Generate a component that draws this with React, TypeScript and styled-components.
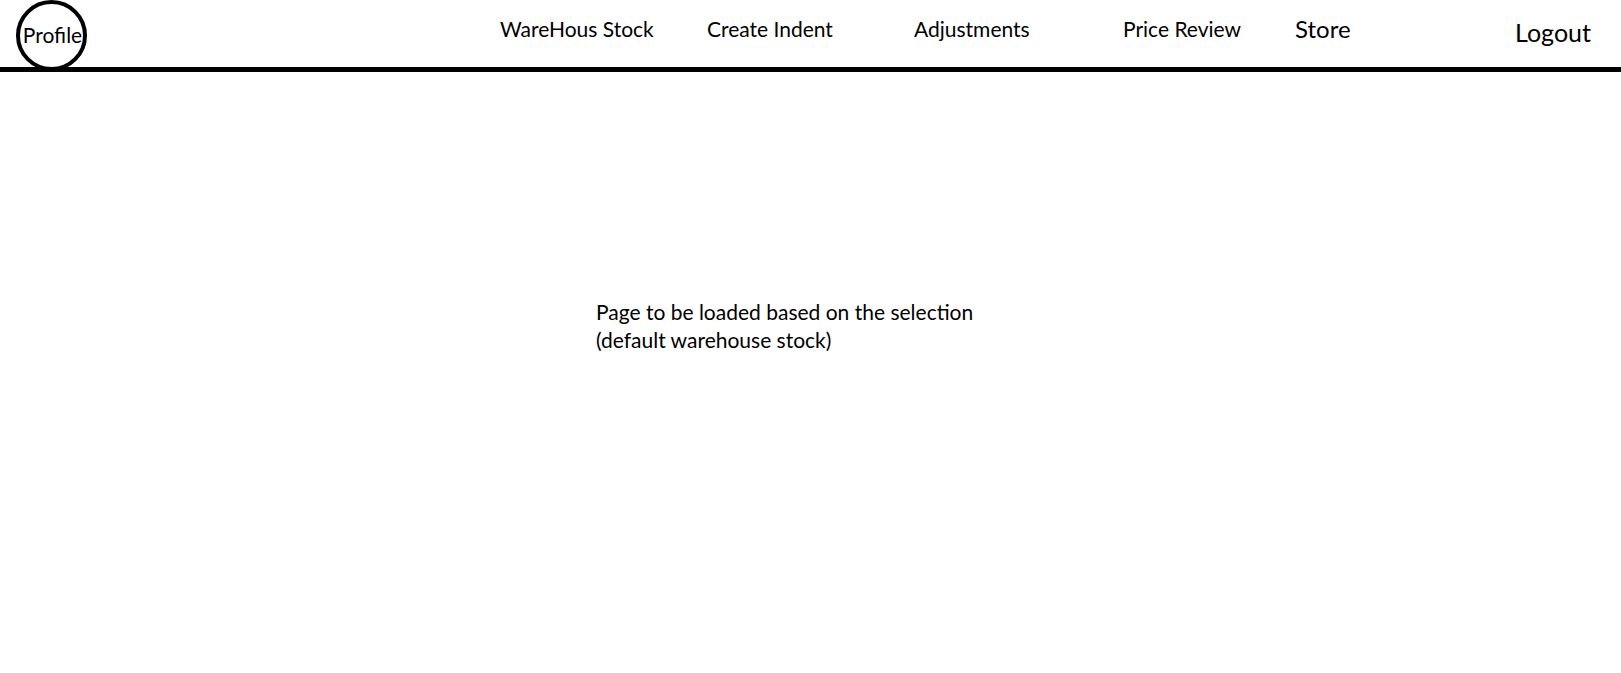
import styled, { createGlobalStyle } from "styled-components";

const GlobalStyle = createGlobalStyle`
  html, body {
    margin: 0;
    padding: 0;
    background: #fff;
  }
  body {
    font-family: Lato, "Open Sans", sans-serif;
    color: #000;
  }
`;

const navItems = [
  { label: "WareHous Stock", width: 207 },
  { label: "Create Indent", width: 207 },
  { label: "Adjustments", width: 209 },
  { label: "Price Review", width: 172 },
];

export default function App() {
  return (
    <Page>
      <GlobalStyle />
      <Header>
        <ProfileCircle>Profile</ProfileCircle>
        <Nav>
          {navItems.map((item) => (
            <NavItem key={item.label} $width={item.width}>
              {item.label}
            </NavItem>
          ))}
          <StoreItem>Store</StoreItem>
        </Nav>
        <Logout>Logout</Logout>
      </Header>
      <Main>
        <Message>
          Page to be loaded based on the selection
          <br />
          (default warehouse stock)
        </Message>
      </Main>
    </Page>
  );
}

// styled components

const Page = styled.div`
  width: 100%;
  min-height: 673px;
`;

const Header = styled.header`
  display: flex;
  align-items: flex-start;
  height: 67px;
  border-bottom: 5px solid #000;
  padding-left: 16px;
  padding-right: 30px;
`;

const ProfileCircle = styled.div`
  box-sizing: border-box;
  width: 71px;
  height: 71px;
  border: 4px solid #000;
  border-radius: 50%;
  display: flex;
  align-items: center;
  justify-content: center;
  font-size: 21px;
  line-height: 1;
  padding: 0 0 3px 2px;
  white-space: nowrap;
  position: relative;
  z-index: 1;
`;

const Nav = styled.nav`
  display: flex;
  margin-left: 413px;
  padding-top: 18px;
`;

const NavItem = styled.div<{ $width: number }>`
  width: ${(p) => p.$width}px;
  font-size: 21px;
  line-height: 1;
  white-space: nowrap;
`;

const StoreItem = styled.div`
  font-size: 24px;
  line-height: 1;
  margin-top: -1px;
`;

const Logout = styled.div`
  margin-left: auto;
  padding-top: 20px;
  font-size: 25px;
  line-height: 1;
`;

const Main = styled.main`
  padding: 226px 0 0 596px;
`;

const Message = styled.p`
  margin: 0;
  font-size: 21px;
  line-height: 28px;
`;
